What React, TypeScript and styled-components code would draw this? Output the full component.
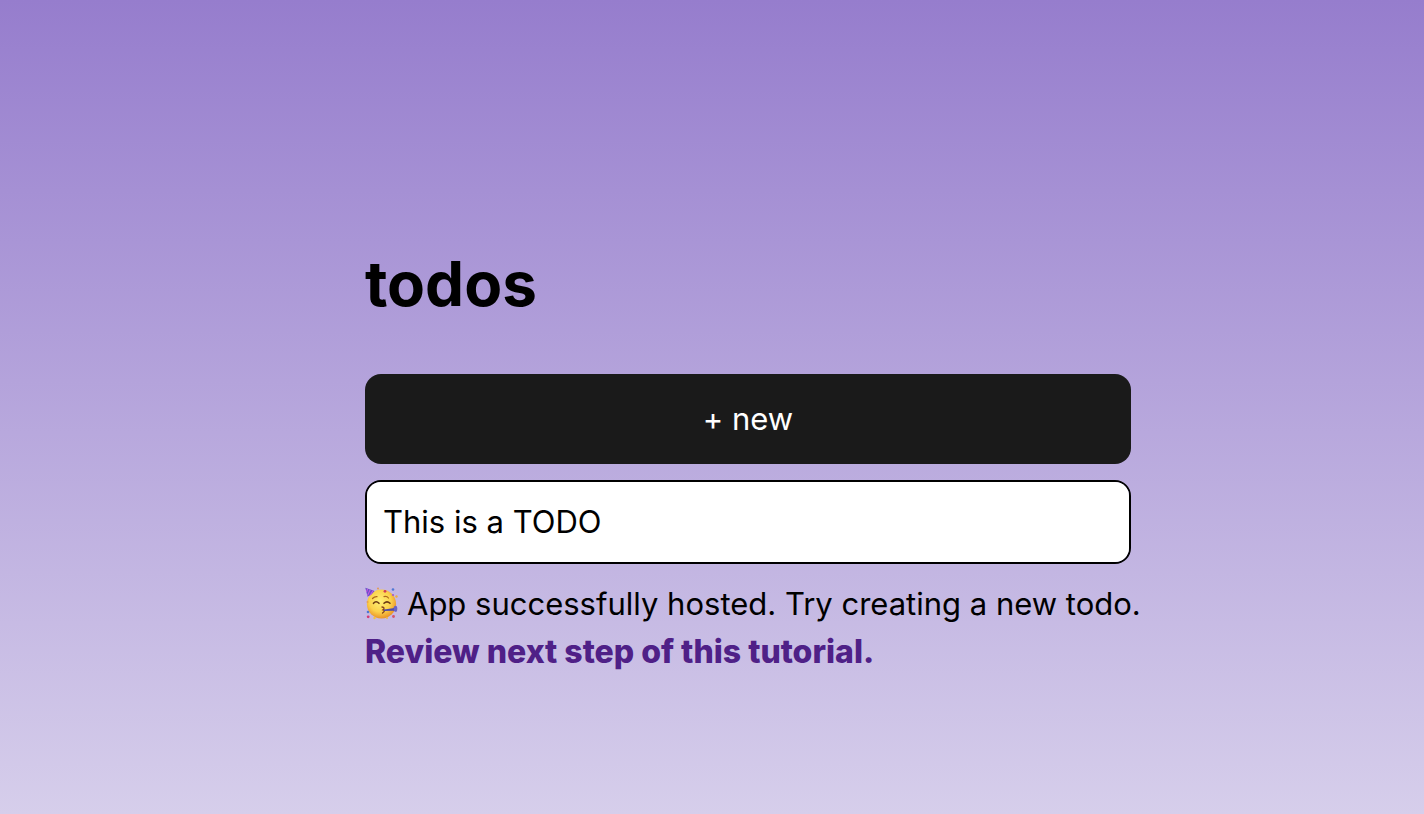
import React, { useState } from "react";
import styled, { createGlobalStyle } from "styled-components";

const GlobalStyle = createGlobalStyle`
  * {
    box-sizing: border-box;
  }
  body {
    margin: 0;
    min-height: 100vh;
    font-family: Inter, "Liberation Sans", sans-serif;
    font-size: 31px;
    line-height: 48px;
    color: #000;
    background: linear-gradient(180deg, #967dcd 0%, #d6ceeb 100%);
  }
`;

const Page = styled.div`
  min-height: 100vh;
  display: flex;
  justify-content: center;
  align-items: center;
  padding: 56px 0 0 72px;
`;

const Main = styled.main`
  display: flex;
  flex-direction: column;
  align-items: stretch;
  width: 766px;
  max-width: 100%;
`;

const Title = styled.h1`
  margin: 42px 0;
  font-size: 62px;
  line-height: 96px;
  font-weight: 700;
`;

const NewButton = styled.button`
  padding: 19px 38px;
  border: 2px solid transparent;
  border-radius: 16px;
  background: #1a1a1a;
  color: #fff;
  font: inherit;
  cursor: pointer;
`;

const TodoList = styled.ul`
  display: flex;
  flex-direction: column;
  gap: 2px;
  margin: 16px 0;
  padding: 0;
  list-style: none;
  overflow: hidden;
  border: 2px solid #000;
  border-radius: 16px;
  background: #000;
`;

const TodoItem = styled.li`
  padding: 16px;
  background: #fff;
`;

const Emoji = styled.svg`
  width: 34px;
  height: 34px;
  flex: none;
`;

const Message = styled.div`
  display: flex;
  align-items: center;
  gap: 8px;
  white-space: nowrap;
`;

const TutorialLink = styled.a`
  align-self: flex-start;
  font-size: 32px;
  font-weight: 800;
  color: #4f2087;
  text-decoration: none;
`;

function PartyFace() {
  return (
    <Emoji viewBox="0 0 34 34" role="img" aria-label="Partying face">
      <defs>
        <radialGradient id="skin" cx="0.45" cy="0.4" r="0.62">
          <stop offset="0" stopColor="#fff078" />
          <stop offset="0.6" stopColor="#fbd24c" />
          <stop offset="1" stopColor="#e88d24" />
        </radialGradient>
      </defs>
      <circle cx="16.500" cy="17" r="14.600" fill="url(#skin)" />
      <path d="M0.300 0.800 L9.600 4 Q7.500 7.500 2.600 9.800 Z" fill="#6650c9" />
      <path d="M2.600 1.800 L1.500 5 M5.200 2.800 L2.500 8.500 M8 3.800 L5.200 8.200" stroke="#c45be0" strokeWidth="1.100" />
      <path d="M7.500 11.500 Q9.500 9.300 12 9.600 M19 9.600 Q22 9 23.500 11" fill="none" stroke="#ad681b" strokeWidth="1.200" strokeLinecap="round" />
      <path d="M8.500 16.300 Q11 13.300 14 16.300 M19 16.300 Q22 13.300 25 16.300" fill="none" stroke="#6b3a13" strokeWidth="1.600" strokeLinecap="round" />
      <path d="M17 20 Q20.500 20.500 18 22.800 Q21 23.200 17.500 26" fill="none" stroke="#85431a" strokeWidth="1.300" strokeLinecap="round" />
      <path d="M19 22.500 L28 21.300 L31 19.500 L31.500 24.500 L28 23.800 L19 24 Z" fill="#4d4aa9" />
      <ellipse cx="30.500" cy="21.700" rx="1.800" ry="3" fill="#6863c4" />
      <circle cx="20" cy="4.300" r="1.400" fill="#d43a55" />
      <circle cx="28" cy="2.500" r="1.300" fill="#4e77d5" />
      <circle cx="31.500" cy="9.500" r="1.200" fill="#edac40" />
      <circle cx="28" cy="8" r="1.100" fill="#a35ac7" />
      <circle cx="13" cy="1.500" r="1" fill="#e59a51" />
      <circle cx="3" cy="25" r="1.300" fill="#4e77d5" />
      <circle cx="3.200" cy="29.800" r="1.400" fill="#d43a75" />
      <circle cx="9.500" cy="31" r="1.200" fill="#f4c13f" />
      <circle cx="22" cy="31" r="1" fill="#efb740" />
      <circle cx="28.500" cy="29.500" r="1.400" fill="#d4546d" />
      <circle cx="2.500" cy="15" r="1" fill="#e8a052" />
    </Emoji>
  );
}

export default function App() {
  const [todos, setTodos] = useState<string[]>(["This is a TODO"]);

  const createTodo = () => {
    const content = window.prompt("Todo content");
    if (content) setTodos([...todos, content]);
  };

  return (
    <>
      <GlobalStyle />
      <Page>
        <Main>
          <Title>todos</Title>
          <NewButton type="button" onClick={createTodo}>
            + new
          </NewButton>
          <TodoList>
            {todos.map((todo, index) => (
              <TodoItem key={index}>{todo}</TodoItem>
            ))}
          </TodoList>
          <Message>
            <PartyFace />
            App successfully hosted. Try creating a new todo.
          </Message>
          <TutorialLink href="#next-step">Review next step of this tutorial.</TutorialLink>
        </Main>
      </Page>
    </>
  );
}
